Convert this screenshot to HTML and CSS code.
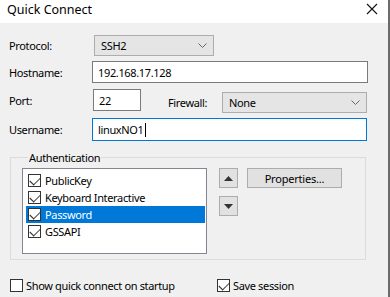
FILE: index.html
```html
<!DOCTYPE html>
<html lang="en">

<head>
  <meta charset="UTF-8">
  <title>Quick Connect</title>
  <link rel="stylesheet" href="styles.css">
</head>

<body>
  <div class='window'>
    <div class='titlebar'>
      <span class='title'>Quick Connect</span>
      <svg class='close' width="12" height="12" viewBox="0 0 12 12"><path d="M1 1 L11 11 M11 1 L1 11" stroke="#111" stroke-width="1.1" fill="none"/></svg>
    </div>
    <div class='content'>
      <div class='row r-protocol'>
        <label class='lbl'>Protocol:</label>
        <div class='select proto'><span>SSH2</span><svg class='chev' width="9" height="5" viewBox="0 0 9 5"><path d="M0.5 0.5 L4.5 4.5 L8.5 0.5" stroke="#666" fill="none"/></svg></div>
      </div>
      <div class='row r-host'>
        <label class='lbl'>Hostname:</label>
        <div class='input host'>192.168.17.128</div>
      </div>
      <div class='row r-port'>
        <label class='lbl'>Port:</label>
        <div class='input port'>22</div>
        <label class='lbl fw'>Firewall:</label>
        <div class='select firewall'><span>None</span><svg class='chev' width="9" height="5" viewBox="0 0 9 5"><path d="M0.5 0.5 L4.5 4.5 L8.5 0.5" stroke="#666" fill="none"/></svg></div>
      </div>
      <div class='row r-user'>
        <label class='lbl'>Username:</label>
        <div class='input user focused'>linuxNO1<span class='caret'></span></div>
      </div>

      <fieldset class='group'>
        <legend>Authentication</legend>
        <div class='group-body'>
          <div class='listbox'>
            <div class='item'><span class='cb checked'></span>PublicKey</div>
            <div class='item'><span class='cb checked'></span>Keyboard Interactive</div>
            <div class='item selected'><span class='cb checked'></span>Password</div>
            <div class='item'><span class='cb checked'></span>GSSAPI</div>
          </div>
          <div class='arrows'>
            <button class='btn arrow'><svg width="9" height="5" viewBox="0 0 9 5"><path d="M0 5 L4.5 0 L9 5 Z" fill="#333"/></svg></button>
            <button class='btn arrow'><svg width="9" height="5" viewBox="0 0 9 5"><path d="M0 0 L4.5 5 L9 0 Z" fill="#333"/></svg></button>
          </div>
          <button class='btn props'>Properties...</button>
        </div>
      </fieldset>

      <div class='footer'>
        <div class='opt startup'><span class='cb'></span>Show quick connect on startup</div>
        <div class='opt'><span class='cb checked'></span>Save session</div>
      </div>
    </div>
  </div>
</body>
</html>
```

FILE: styles.css
```css
body {
  margin: 0;
  background: #f0f0f0;
  font-family: "Noto Sans", "Open Sans", sans-serif;
  font-size: 11px;
  letter-spacing: -0.35px;
  color: #000;
}
.window {
  width: 390px;
  height: 297px;
  box-sizing: border-box;
  border-right: 2px solid #6b6b6b;
  background: #f0f0f0;
  overflow: hidden;
}
.titlebar {
  height: 23px;
  background: #fff;
  display: flex;
  align-items: center;
  justify-content: space-between;
  padding: 0 10px 0 7px;
}
.title {
  font-size: 12.5px;
  letter-spacing: 0;
  margin-top: -5px;
}
.close {
  margin-top: -5px;
}
.content {
  padding: 12px 0 0 9px;
}
.row {
  display: flex;
  align-items: center;
}
.lbl {
  width: 83px;
  flex: none;
}
.select {
  box-sizing: border-box;
  height: 21px;
  background: #e5e5e5;
  border: 1px solid #adadad;
  display: flex;
  align-items: center;
  justify-content: space-between;
  padding: 0 6px 0 6px;
}
.proto {
  width: 120px;
  margin-left: 2px;
}
.input {
  box-sizing: border-box;
  background: #fff;
  border: 1px solid #7a7a7a;
  padding: 0 0 0 5px;
  display: flex;
  align-items: center;
}
.r-host { margin-top: 5px; }
.host { width: 276px; height: 22px; }
.r-port { margin-top: 6px; align-items: flex-start; }
.r-port .lbl:first-child { margin-top: 4px; }
.port { width: 48px; height: 22px; margin-left: 1px; }
.fw { width: 54px; margin-left: 27px; margin-top: 6px; }
.firewall { width: 145px; margin-top: 3px; }
.r-user { margin-top: 5px; }
.user { width: 275px; height: 23px; }
.focused { border-color: #0078d7; }
.caret {
  display: inline-block;
  width: 1px;
  height: 14px;
  background: #000;
  margin-left: 1px;
}
.group {
  margin: 9px 0 0 1px;
  width: 356px;
  height: 110px;
  box-sizing: border-box;
  border: 1px solid #dcdcdc;
  padding: 0 0 0 10px;
}
.group legend {
  padding: 0 1px;
  margin-left: 7px;
}
.group-body {
  display: flex;
  align-items: flex-start;
  padding-top: 3px;
}
.listbox {
  width: 185px;
  height: 86px;
  box-sizing: border-box;
  background: #fff;
  border: 1px solid #828790;
  margin-left: 1px;
  padding: 3px 0 0 3px;
}
.item {
  height: 17px;
  display: flex;
  align-items: center;
  padding-left: 2px;
  margin-right: 1px;
}
.item.selected {
  background: #0078d7;
  color: #fff;
}
.cb {
  display: inline-block;
  box-sizing: border-box;
  width: 13px;
  height: 13px;
  border: 1px solid #333;
  background: #fff;
  margin-right: 4px;
  position: relative;
  flex: none;
}
.cb.checked::after {
  content: "";
  position: absolute;
  left: 1px;
  top: 1px;
  width: 8px;
  height: 5px;
  border-left: 1px solid #333;
  border-bottom: 1px solid #333;
  transform: translate(0.5px, 1px) rotate(-45deg) scaleX(1.1);
  transform-origin: center;
}
.arrows {
  display: flex;
  flex-direction: column;
  gap: 8px;
  margin-left: 12px;
}
.btn {
  box-sizing: border-box;
  background: #e1e1e1;
  border: 1px solid #adadad;
  font-family: inherit;
  font-size: 11px;
  letter-spacing: -0.2px;
  padding: 0;
  display: flex;
  align-items: center;
  justify-content: center;
}
.arrow {
  width: 19px;
  height: 20px;
}
.props {
  width: 95px;
  height: 20px;
  margin-left: 9px;
}
.footer {
  display: flex;
  margin-top: 18px;
  padding-left: 1px;
}
.opt {
  display: flex;
  align-items: center;
}
.opt .cb {
  margin-right: 3px;
}
.startup {
  width: 207px;
}
```
